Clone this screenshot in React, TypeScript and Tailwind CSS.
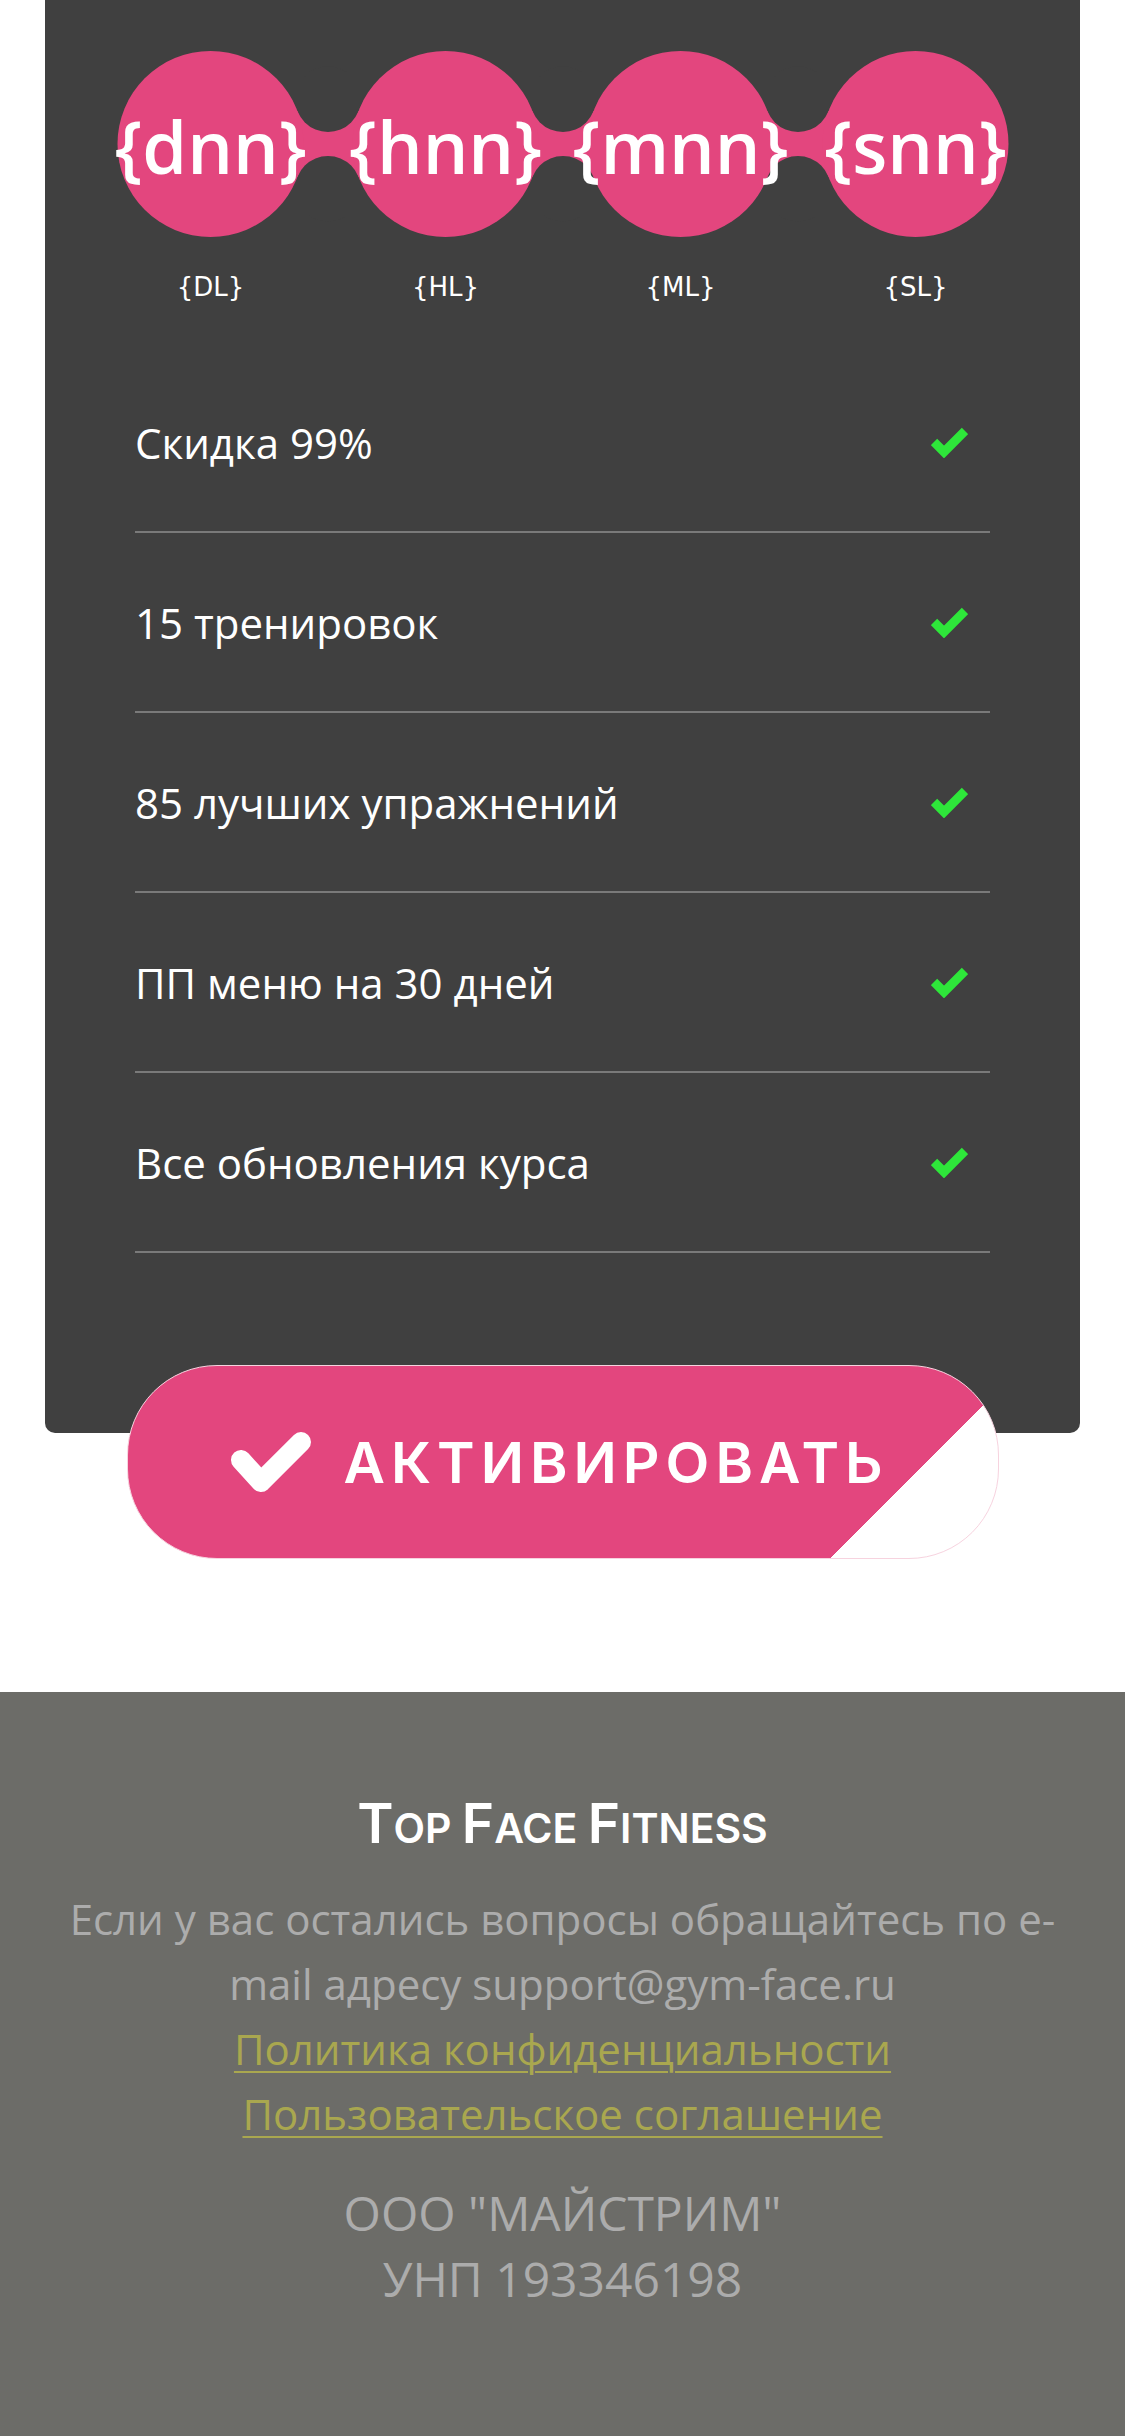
import React from "react";

const PINK = "#e3467e";
const DARK = "#404040";

const timers = [
  { value: "{dnn}", label: "{DL}" },
  { value: "{hnn}", label: "{HL}" },
  { value: "{mnn}", label: "{ML}" },
  { value: "{snn}", label: "{SL}" },
];

const features = [
  "Скидка 99%",
  "15 тренировок",
  "85 лучших упражнений",
  "ПП меню на 30 дней",
  "Все обновления курса",
];

// metaball-ish bubbles behind the countdown values
function Bubbles() {
  const centers = [165.5, 400.5, 635.5, 870.5];
  const R = 93;
  const cy = 93;
  const half = 12; // half thickness of the neck
  return (
    <svg width="1035" height="186" viewBox="0 0 1035 186" className="absolute inset-0">
      {centers.slice(0, 3).map((c, i) => {
        const next = centers[i + 1];
        const mid = (c + next) / 2;
        const dx = mid - c;
        const r = (dx * dx + half * half - R * R) / (2 * R - 2 * half);
        const dy = half + r;
        const dist = Math.sqrt(dx * dx + dy * dy);
        const ty = cy - (R * dy) / dist;
        return (
          <g key={i}>
            <rect x={c} y={ty} width={next - c} height={2 * (cy - ty)} fill={PINK} />
            <circle cx={mid} cy={cy - half - r} r={r} fill={DARK} />
            <circle cx={mid} cy={cy + half + r} r={r} fill={DARK} />
          </g>
        );
      })}
      {centers.map((c) => (
        <circle key={c} cx={c} cy={cy} r={R} fill={PINK} />
      ))}
    </svg>
  );
}

function GreenCheck() {
  return (
    <svg width="37" height="31" viewBox="0 0 37 31">
      <polyline points="3,15 13,25 34,4" fill="none" stroke="#2ee63a" strokeWidth="9" strokeLinejoin="miter" />
    </svg>
  );
}

function WhiteCheck() {
  return (
    <svg width="82" height="61" viewBox="0 0 82 61">
      <polyline
        points="11,28 31,50 71,10"
        fill="none"
        stroke="#ffffff"
        strokeWidth="20"
        strokeLinecap="round"
        strokeLinejoin="round"
      />
    </svg>
  );
}

export default function App() {
  return (
    <div className="w-[1125px] bg-white">
      <div className="mx-[45px] rounded-b-[10px] bg-[#404040] pt-[51px] pb-[180px]">
        <div className="relative h-[186px]">
          <Bubbles />
          <div className="relative grid h-[186px] w-[988px] grid-cols-4 pl-[48px]">
            {timers.map((t) => (
              <div
                key={t.value}
                className="flex items-center justify-center pt-[4px] font-['Open_Sans',sans-serif] text-[72px] leading-[72px] font-semibold text-white"
              >
                {t.value}
              </div>
            ))}
          </div>
        </div>
        <div className="mt-[35px] grid w-[988px] grid-cols-4 pl-[48px]">
          {timers.map((t) => (
            <div
              key={t.label}
              className="text-center font-['DejaVu_Sans',sans-serif] text-[26px] leading-[30px] text-white"
            >
              {t.label}
            </div>
          ))}
        </div>
        <ul className="mt-[51px] px-[90px]">
          {features.map((f) => (
            <li
              key={f}
              className="flex h-[180px] items-center justify-between border-b-2 border-[#7a7a7a] pr-[22px]"
            >
              <span className="font-['Open_Sans',sans-serif] text-[42px] text-white">{f}</span>
              <GreenCheck />
            </li>
          ))}
        </ul>
      </div>

      <button
        type="button"
        className="relative z-10 mx-auto -mt-[68px] flex h-[194px] w-[872px] items-center gap-[32px] rounded-[90px] border border-[#f7d3df] bg-[linear-gradient(135deg,#e3467e_84.2%,#ffffff_84.2%)] pl-[102px]"
      >
        <WhiteCheck />
        <span className="font-['Inter',sans-serif] text-[57px] leading-none font-semibold tracking-[6px] text-white">
          АКТИВИРОВАТЬ
        </span>
      </button>

      <footer className="mt-[133px] h-[744px] bg-[#6c6c68] px-[45px] pt-[98px] text-center">
        <h3 className="font-['Inter',sans-serif] leading-[66px] font-semibold text-white">
          <span className="text-[55px]">T</span>
          <span className="text-[41px]">OP </span>
          <span className="text-[55px]">F</span>
          <span className="text-[41px]">ACE </span>
          <span className="text-[55px]">F</span>
          <span className="text-[41px]">ITNESS</span>
        </h3>
        <div className="mt-[16px] font-['Open_Sans',sans-serif] text-[42px] leading-[65px]">
          <p className="text-[#acacac]">
            Если у вас остались вопросы обращайтесь по e-mail адресу support@gym-face.ru
          </p>
          <a href="#" className="block text-[#a9a74f] underline decoration-2 underline-offset-[6px]">
            Политика конфиденциальности
          </a>
          <a href="#" className="block text-[#a9a74f] underline decoration-2 underline-offset-[6px]">
            Пользовательское соглашение
          </a>
        </div>
        <div className="mt-[34px] font-['Open_Sans',sans-serif] text-[48px] leading-[66px] text-[#acacac]">
          <p>ООО "МАЙСТРИМ"</p>
          <p>УНП 193346198</p>
        </div>
      </footer>
    </div>
  );
}
